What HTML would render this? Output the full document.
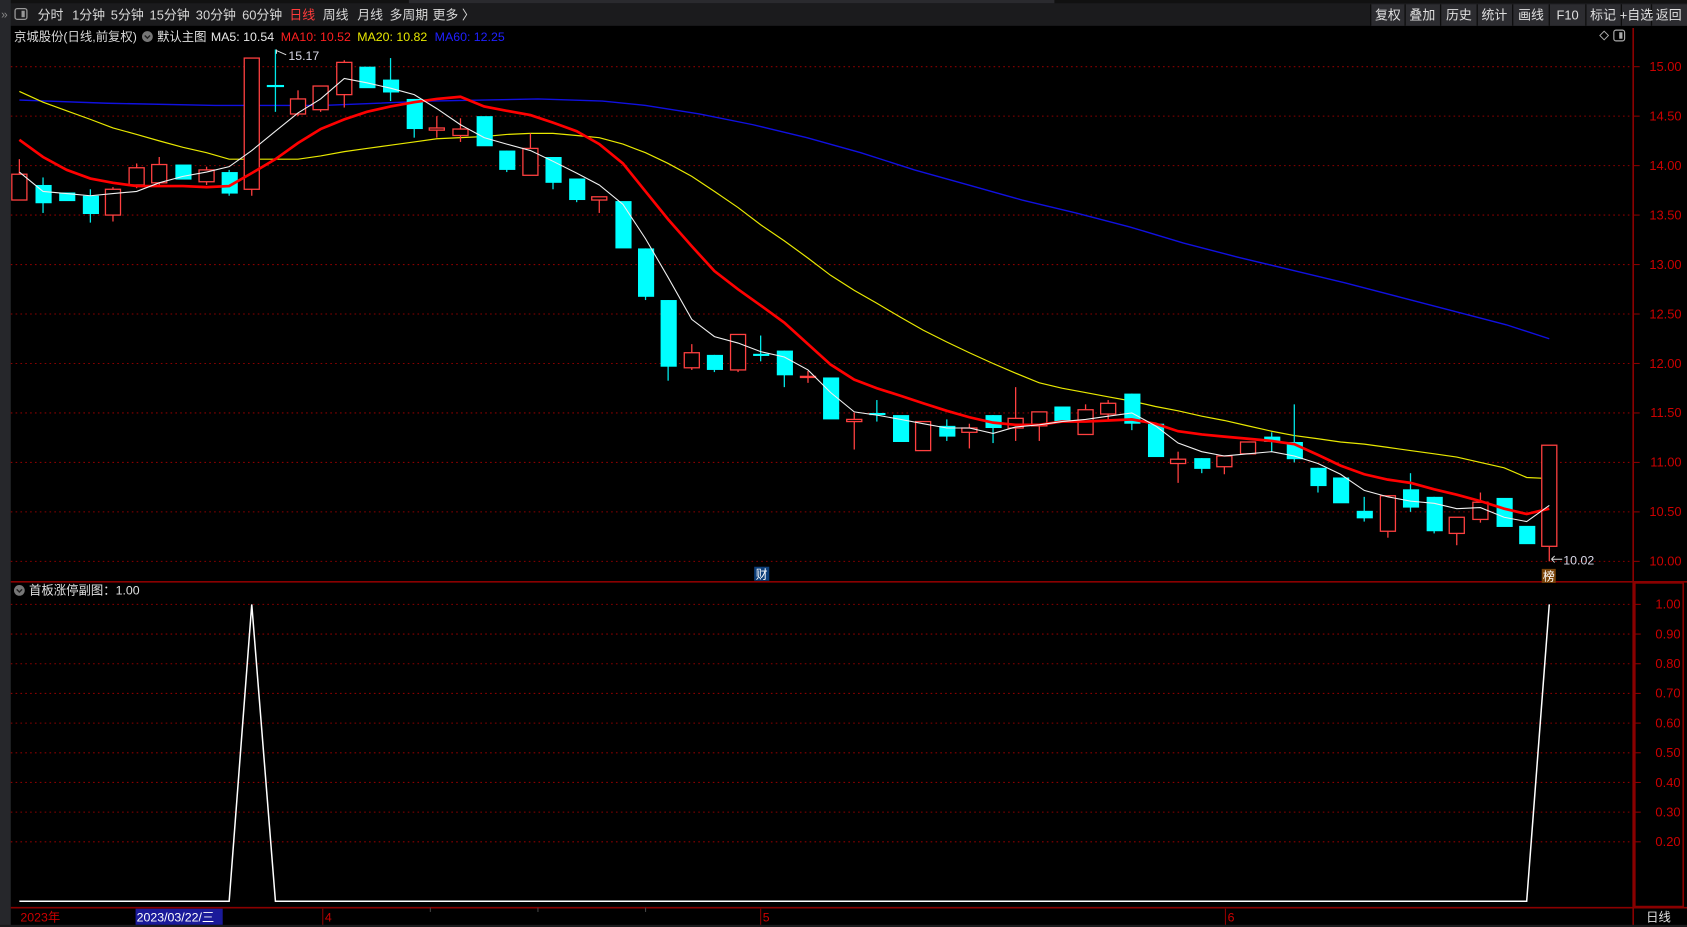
<!DOCTYPE html>
<html><head><meta charset="utf-8"><style>
html,body{margin:0;padding:0;background:#000;overflow:hidden}
svg{display:block}
text{font-family:"Liberation Sans","Noto Sans CJK SC",sans-serif}
</style></head><body>
<svg width="1687" height="927" viewBox="0 0 1568 862" preserveAspectRatio="none" xmlns="http://www.w3.org/2000/svg">
<rect width="1568" height="862" fill="#000"/>
<!-- top toolbar -->
<rect x="0" y="0" width="1568" height="24" fill="#1b1b1d"/>
<rect x="0" y="0" width="1568" height="3" fill="#111"/>
<rect x="380" y="0" width="600" height="3" fill="#2a2a2e"/>
<rect x="0" y="0" width="10" height="862" fill="#26272b"/>
<text x="1" y="17" font-size="11" fill="#888">»</text>
<rect x="14" y="8" width="11" height="10" rx="2" fill="none" stroke="#999" stroke-width="1.2"/>
<rect x="20" y="10" width="3" height="6" fill="#999"/>
<g font-size="12" fill="#d8d8d8">
<text x="35" y="18">分时</text><text x="67" y="18">1分钟</text><text x="103" y="18">5分钟</text><text x="139" y="18">15分钟</text><text x="182" y="18">30分钟</text><text x="225" y="18">60分钟</text>
<text x="269" y="18" fill="#ff3b3b">日线</text><text x="300" y="18">周线</text><text x="332" y="18">月线</text><text x="362" y="18">多周期</text><text x="402" y="18">更多 〉</text>
</g>
<g fill="#2c2c30"><rect x="1274" y="4" width="294" height="20"/></g>
<g stroke="#0d0d0d" stroke-width="1.2">
<line x1="1274" y1="4" x2="1274" y2="24"/><line x1="1306" y1="4" x2="1306" y2="24"/><line x1="1339" y1="4" x2="1339" y2="24"/><line x1="1373" y1="4" x2="1373" y2="24"/><line x1="1406" y1="4" x2="1406" y2="24"/><line x1="1440" y1="4" x2="1440" y2="24"/><line x1="1474" y1="4" x2="1474" y2="24"/><line x1="1507" y1="4" x2="1507" y2="24"/><line x1="1535" y1="4" x2="1535" y2="24"/>
</g>
<g font-size="12" fill="#e0e0e0" text-anchor="middle">
<text x="1290" y="18">复权</text><text x="1322" y="18">叠加</text><text x="1356" y="18">历史</text><text x="1389" y="18">统计</text><text x="1423" y="18">画线</text><text x="1457" y="18">F10</text><text x="1490" y="18">标记</text><text x="1521" y="18">+自选</text><text x="1551" y="18">返回</text>
</g>
<!-- header -->
<g font-size="11.5">
<text x="13" y="38" fill="#d8d8d8">京城股份(日线,前复权)</text>
<circle cx="137" cy="34" r="5" fill="#777"/><path d="M134.5 33 L137 35.5 L139.5 33" stroke="#222" fill="none" stroke-width="1.3"/>
<text x="146" y="38" fill="#e0e0e0">默认主图</text>
<text x="196" y="38" fill="#e8e8e8">MA5: 10.54</text>
<text x="261" y="38" fill="#ff2020">MA10: 10.52</text>
<text x="332" y="38" fill="#e8e800">MA20: 10.82</text>
<text x="404" y="38" fill="#2020ff">MA60: 12.25</text>
</g>
<path d="M1491 29 L1495 33 L1491 37 L1487 33 Z" fill="none" stroke="#aaa" stroke-width="0.9"/>
<rect x="1500" y="28" width="10" height="10" rx="2" fill="none" stroke="#aaa" stroke-width="1.1"/><rect x="1505" y="30" width="3" height="6" fill="#aaa"/>
<!-- grid -->
<g stroke="#8a0000" stroke-width="1" stroke-dasharray="1.5,3">
<line x1="10" y1="62" x2="1518" y2="62"/><line x1="10" y1="108" x2="1518" y2="108"/><line x1="10" y1="154" x2="1518" y2="154"/><line x1="10" y1="200" x2="1518" y2="200"/><line x1="10" y1="246" x2="1518" y2="246"/><line x1="10" y1="292" x2="1518" y2="292"/><line x1="10" y1="338" x2="1518" y2="338"/><line x1="10" y1="384" x2="1518" y2="384"/><line x1="10" y1="430" x2="1518" y2="430"/><line x1="10" y1="476" x2="1518" y2="476"/><line x1="10" y1="522" x2="1518" y2="522"/>
<line x1="10" y1="562" x2="1518" y2="562"/><line x1="10" y1="589.6" x2="1518" y2="589.6"/><line x1="10" y1="617.2" x2="1518" y2="617.2"/><line x1="10" y1="644.8" x2="1518" y2="644.8"/><line x1="10" y1="672.4" x2="1518" y2="672.4"/><line x1="10" y1="700" x2="1518" y2="700"/><line x1="10" y1="727.6" x2="1518" y2="727.6"/><line x1="10" y1="755.2" x2="1518" y2="755.2"/><line x1="10" y1="782.8" x2="1518" y2="782.8"/>
</g>
<!-- axis frame -->
<g stroke="#8a0000" stroke-width="1.5" fill="none">
<line x1="1518" y1="26" x2="1518" y2="860"/>
<line x1="10" y1="541" x2="1568" y2="541"/>
<line x1="10" y1="844" x2="1568" y2="844"/>
<rect x="1519.5" y="542" width="45" height="301"/>
</g>
<g stroke="#8a0000" stroke-width="1">
<line x1="1518" y1="62" x2="1524" y2="62"/><line x1="1518" y1="108" x2="1524" y2="108"/><line x1="1518" y1="154" x2="1524" y2="154"/><line x1="1518" y1="200" x2="1524" y2="200"/><line x1="1518" y1="246" x2="1524" y2="246"/><line x1="1518" y1="292" x2="1524" y2="292"/><line x1="1518" y1="338" x2="1524" y2="338"/><line x1="1518" y1="384" x2="1524" y2="384"/><line x1="1518" y1="430" x2="1524" y2="430"/><line x1="1518" y1="476" x2="1524" y2="476"/><line x1="1518" y1="522" x2="1524" y2="522"/>
<line x1="1520" y1="562" x2="1525" y2="562"/><line x1="1520" y1="589.6" x2="1525" y2="589.6"/><line x1="1520" y1="617.2" x2="1525" y2="617.2"/><line x1="1520" y1="644.8" x2="1525" y2="644.8"/><line x1="1520" y1="672.4" x2="1525" y2="672.4"/><line x1="1520" y1="700" x2="1525" y2="700"/><line x1="1520" y1="727.6" x2="1525" y2="727.6"/><line x1="1520" y1="755.2" x2="1525" y2="755.2"/><line x1="1520" y1="782.8" x2="1525" y2="782.8"/>
</g>
<g font-size="12" fill="#cc0000" text-anchor="end">
<text x="1563" y="66">15.00</text><text x="1563" y="112">14.50</text><text x="1563" y="158">14.00</text><text x="1563" y="204">13.50</text><text x="1563" y="250">13.00</text><text x="1563" y="296">12.50</text><text x="1563" y="342">12.00</text><text x="1563" y="388">11.50</text><text x="1563" y="434">11.00</text><text x="1563" y="480">10.50</text><text x="1563" y="526">10.00</text>
<text x="1562" y="566">1.00</text><text x="1562" y="593.6">0.90</text><text x="1562" y="621.2">0.80</text><text x="1562" y="648.8">0.70</text><text x="1562" y="676.4">0.60</text><text x="1562" y="704">0.50</text><text x="1562" y="731.6">0.40</text><text x="1562" y="759.2">0.30</text><text x="1562" y="786.8">0.20</text>
</g>
<!-- MAs -->
<polyline fill="none" stroke="#1010e0" stroke-width="1.3" points="18,93 100,96 200,98 300,98 400,94 500,92 560,94 600,98 650,106 700,116 750,128 800,142 850,158 900,172 950,186 1000,198 1050,211 1100,226 1150,239 1200,251 1250,263 1300,276 1350,289 1400,302 1440,315"/>
<polyline fill="none" stroke="#e8e800" stroke-width="1.1" points="18,85 40,95 62,103 84,111 105,119 127,125 148,131 170,137 192,142 213,148 234,148 256,148 277,148 298,145 320,141 341,138 363,135 385,132 406,129 428,128 450,127 471,125 493,124 514,124 536,126 557,128 579,134 600,142 621,152 643,164 664,178 686,193 707,209 729,224 751,240 772,256 794,270 815,282 837,295 858,307 880,318 901,328 923,338 944,347 966,356 987,361 1009,365 1030,369 1052,373 1074,378 1095,382 1117,387 1138,391 1160,396 1182,401 1203,405 1225,408 1246,411 1268,413 1290,416 1311,419 1333,422 1354,425 1376,430 1398,435 1419,444 1440,445"/>
<!-- candles -->
<g stroke-width="1.2">
<g stroke="#ff4040">
<line x1="18" y1="148" x2="18" y2="186"/><line x1="105" y1="174" x2="105" y2="206"/><line x1="127" y1="152" x2="127" y2="175"/><line x1="148" y1="146" x2="148" y2="172"/><line x1="192" y1="155" x2="192" y2="172"/><line x1="234" y1="54" x2="234" y2="182"/><line x1="277" y1="84" x2="277" y2="108"/><line x1="298" y1="80" x2="298" y2="104"/><line x1="320" y1="56" x2="320" y2="100"/><line x1="406" y1="108" x2="406" y2="128"/><line x1="428" y1="110" x2="428" y2="132"/><line x1="493" y1="124" x2="493" y2="163"/><line x1="557" y1="183" x2="557" y2="198"/><line x1="643" y1="320" x2="643" y2="344"/><line x1="686" y1="311" x2="686" y2="346"/><line x1="751" y1="345" x2="751" y2="356"/><line x1="794" y1="384" x2="794" y2="418"/><line x1="858" y1="392" x2="858" y2="419"/><line x1="901" y1="394" x2="901" y2="417"/><line x1="944" y1="360" x2="944" y2="410"/><line x1="966" y1="383" x2="966" y2="410"/><line x1="1009" y1="376" x2="1009" y2="404"/><line x1="1030" y1="372" x2="1030" y2="392"/><line x1="1095" y1="420" x2="1095" y2="449"/><line x1="1138" y1="424" x2="1138" y2="441"/><line x1="1160" y1="411" x2="1160" y2="422"/><line x1="1290" y1="461" x2="1290" y2="500"/><line x1="1354" y1="481" x2="1354" y2="507"/><line x1="1376" y1="458" x2="1376" y2="486"/><line x1="1440" y1="414" x2="1440" y2="522"/>
</g>
<g stroke="#00e8e8">
<line x1="40" y1="165" x2="40" y2="198"/><line x1="84" y1="176" x2="84" y2="207"/><line x1="213" y1="158" x2="213" y2="182"/><line x1="256" y1="46" x2="256" y2="104"/><line x1="363" y1="54" x2="363" y2="94"/><line x1="385" y1="92" x2="385" y2="128"/><line x1="471" y1="140" x2="471" y2="160"/><line x1="514" y1="146" x2="514" y2="176"/><line x1="536" y1="166" x2="536" y2="188"/><line x1="600" y1="231" x2="600" y2="279"/><line x1="621" y1="279" x2="621" y2="354"/><line x1="664" y1="330" x2="664" y2="346"/><line x1="707" y1="312" x2="707" y2="336"/><line x1="729" y1="326" x2="729" y2="360"/><line x1="815" y1="372" x2="815" y2="392"/><line x1="880" y1="390" x2="880" y2="410"/><line x1="923" y1="386" x2="923" y2="412"/><line x1="1052" y1="366" x2="1052" y2="400"/><line x1="1117" y1="426" x2="1117" y2="440"/><line x1="1182" y1="402" x2="1182" y2="420"/><line x1="1203" y1="376" x2="1203" y2="430"/><line x1="1225" y1="435" x2="1225" y2="458"/><line x1="1268" y1="462" x2="1268" y2="485"/><line x1="1311" y1="440" x2="1311" y2="476"/><line x1="1333" y1="462" x2="1333" y2="496"/>
</g>
<g fill="#000" stroke="#ff4040">
<rect x="11" y="162" width="14" height="24"/><rect x="98" y="176" width="14" height="24"/><rect x="120" y="156" width="14" height="16"/><rect x="141" y="153" width="14" height="17"/><rect x="185" y="158" width="14" height="11"/><rect x="227" y="54" width="14" height="122"/><rect x="270" y="92" width="14" height="14"/><rect x="291" y="80" width="14" height="22"/><rect x="313" y="58" width="14" height="30"/><rect x="399" y="119" width="14" height="2"/><rect x="421" y="120" width="14" height="6"/><rect x="486" y="138" width="14" height="25"/><rect x="550" y="183" width="14" height="3"/><rect x="636" y="328" width="14" height="14"/><rect x="679" y="311" width="14" height="33"/><rect x="744" y="350" width="14" height="1"/><rect x="787" y="390" width="14" height="2"/><rect x="851" y="392" width="14" height="27"/><rect x="894" y="398" width="14" height="4"/><rect x="937" y="389" width="14" height="9"/><rect x="959" y="383" width="14" height="13"/><rect x="1002" y="381" width="14" height="23"/><rect x="1023" y="375" width="14" height="10"/><rect x="1088" y="427" width="14" height="4"/><rect x="1131" y="424" width="14" height="10"/><rect x="1153" y="411" width="14" height="11"/><rect x="1283" y="461" width="14" height="33"/><rect x="1347" y="481" width="14" height="15"/><rect x="1369" y="467" width="14" height="16"/><rect x="1433" y="414" width="14" height="94"/>
</g>
<g fill="#00ffff" stroke="none">
<rect x="33" y="172" width="15" height="17"/><rect x="55" y="179" width="15" height="8"/><rect x="77" y="182" width="15" height="17"/><rect x="163" y="153" width="15" height="14"/><rect x="206" y="160" width="15" height="20"/><rect x="248" y="79" width="16" height="2"/><rect x="334" y="62" width="15" height="20"/><rect x="356" y="74" width="15" height="12"/><rect x="378" y="92" width="15" height="28"/><rect x="443" y="108" width="15" height="28"/><rect x="464" y="140" width="15" height="18"/><rect x="507" y="146" width="15" height="24"/><rect x="529" y="166" width="15" height="20"/><rect x="572" y="187" width="15" height="44"/><rect x="593" y="231" width="15" height="45"/><rect x="614" y="279" width="15" height="62"/><rect x="657" y="330" width="15" height="14"/><rect x="700" y="329" width="15" height="2"/><rect x="722" y="326" width="15" height="23"/><rect x="765" y="351" width="15" height="39"/><rect x="808" y="384" width="15" height="2"/><rect x="830" y="386" width="15" height="25"/><rect x="873" y="396" width="15" height="10"/><rect x="916" y="386" width="15" height="12"/><rect x="980" y="378" width="15" height="14"/><rect x="1045" y="366" width="15" height="28"/><rect x="1067" y="394" width="15" height="31"/><rect x="1110" y="426" width="15" height="10"/><rect x="1175" y="406" width="15" height="5"/><rect x="1196" y="411" width="15" height="16"/><rect x="1218" y="435" width="15" height="17"/><rect x="1239" y="444" width="15" height="24"/><rect x="1261" y="475" width="15" height="7"/><rect x="1304" y="455" width="15" height="17"/><rect x="1326" y="462" width="15" height="32"/><rect x="1391" y="463" width="15" height="27"/><rect x="1412" y="489" width="15" height="17"/>
</g>
</g>
<polyline fill="none" stroke="#ff0000" stroke-width="2.5" points="18,130 40,146 62,158 84,166 105,170 127,173 148,173 170,173 192,174 213,173 234,161 256,148 277,133 298,120 320,111 341,104 363,99 385,95 406,92 428,90 450,99 471,103 493,107 514,114 536,122 557,134 579,152 600,178 621,204 643,229 664,252 686,269 707,284 729,300 751,320 772,339 794,353 815,361 837,368 858,375 880,382 901,388 923,393 944,395 966,395 987,392 1009,392 1030,391 1052,390 1074,394 1095,401 1117,404 1138,406 1160,408 1182,410 1203,413 1225,423 1246,433 1268,441 1290,446 1311,449 1333,455 1354,460 1376,466 1398,473 1419,478 1440,473"/>
<polyline fill="none" stroke="#f0f0f0" stroke-width="1" points="18,160 40,178 62,180 84,182 105,180 127,178 148,170 170,164 192,160 213,155 234,140 256,122 277,105 298,92 320,73 341,77 363,82 385,88 406,101 428,116 450,128 471,134 493,140 514,150 536,161 557,172 579,190 600,222 621,258 643,297 664,313 686,319 707,327 729,332 751,344 772,365 794,383 815,386 837,390 858,394 880,398 901,398 923,403 944,397 966,395 987,392 1009,390 1030,387 1052,384 1074,396 1095,412 1117,420 1138,424 1160,422 1182,420 1203,424 1225,431 1246,441 1268,456 1290,462 1311,466 1333,468 1354,473 1376,472 1398,481 1419,485 1440,470"/>
<!-- annotations -->
<path d="M257 46 L257 50 M257 47 L266 51" stroke="#ddd" stroke-width="0.9" fill="none"/>
<text x="268" y="56" font-size="11.5" fill="#d8d8e8">15.17</text>
<path d="M1442 520 L1452 520 M1442 520 L1445 517 M1442 520 L1445 523" stroke="#ddd" stroke-width="0.9" fill="none"/>
<text x="1453" y="525" font-size="11.5" fill="#d8d8e8">10.02</text>
<rect x="701" y="527" width="14" height="13" fill="#0d3f7a"/><text x="708" y="538" font-size="11" fill="#fff" text-anchor="middle">财</text>
<rect x="1433" y="529" width="13" height="13" fill="#7a4408"/><text x="1439.5" y="540" font-size="11" fill="#fff" text-anchor="middle">榜</text>
<!-- sub panel -->
<circle cx="18" cy="549" r="5" fill="#777"/><path d="M15.5 548 L18 550.5 L20.5 548" stroke="#222" fill="none" stroke-width="1.3"/>
<text x="27" y="553" font-size="11.5" fill="#e0e0e0">首板涨停副图：1.00</text>
<polyline fill="none" stroke="#fff" stroke-width="1.4" points="18,838 213,838 234,562 256,838 1419,838 1440,562"/>
<!-- bottom -->
<g stroke="#8a0000" stroke-width="1"><line x1="300" y1="845" x2="300" y2="860"/><line x1="707" y1="845" x2="707" y2="860"/><line x1="1139" y1="845" x2="1139" y2="860"/><line x1="1518" y1="845" x2="1518" y2="860"/></g>
<g stroke="#444" stroke-width="1"><line x1="400" y1="844" x2="400" y2="848"/><line x1="500" y1="844" x2="500" y2="848"/><line x1="600" y1="844" x2="600" y2="848"/></g>
<g font-size="11.5">
<text x="19" y="857" fill="#cc0000">2023年</text>
<rect x="126" y="845" width="81" height="15" fill="#1a1a9a"/><text x="127" y="857" fill="#fff">2023/03/22/三</text>
<text x="302" y="857" fill="#cc0000">4</text><text x="709" y="857" fill="#cc0000">5</text><text x="1141" y="857" fill="#cc0000">6</text>
<text x="1530" y="857" fill="#e0e0e0">日线</text>
</g>
<rect x="0" y="860" width="1568" height="2" fill="#1b1b1d"/>
</svg>
</body></html>
